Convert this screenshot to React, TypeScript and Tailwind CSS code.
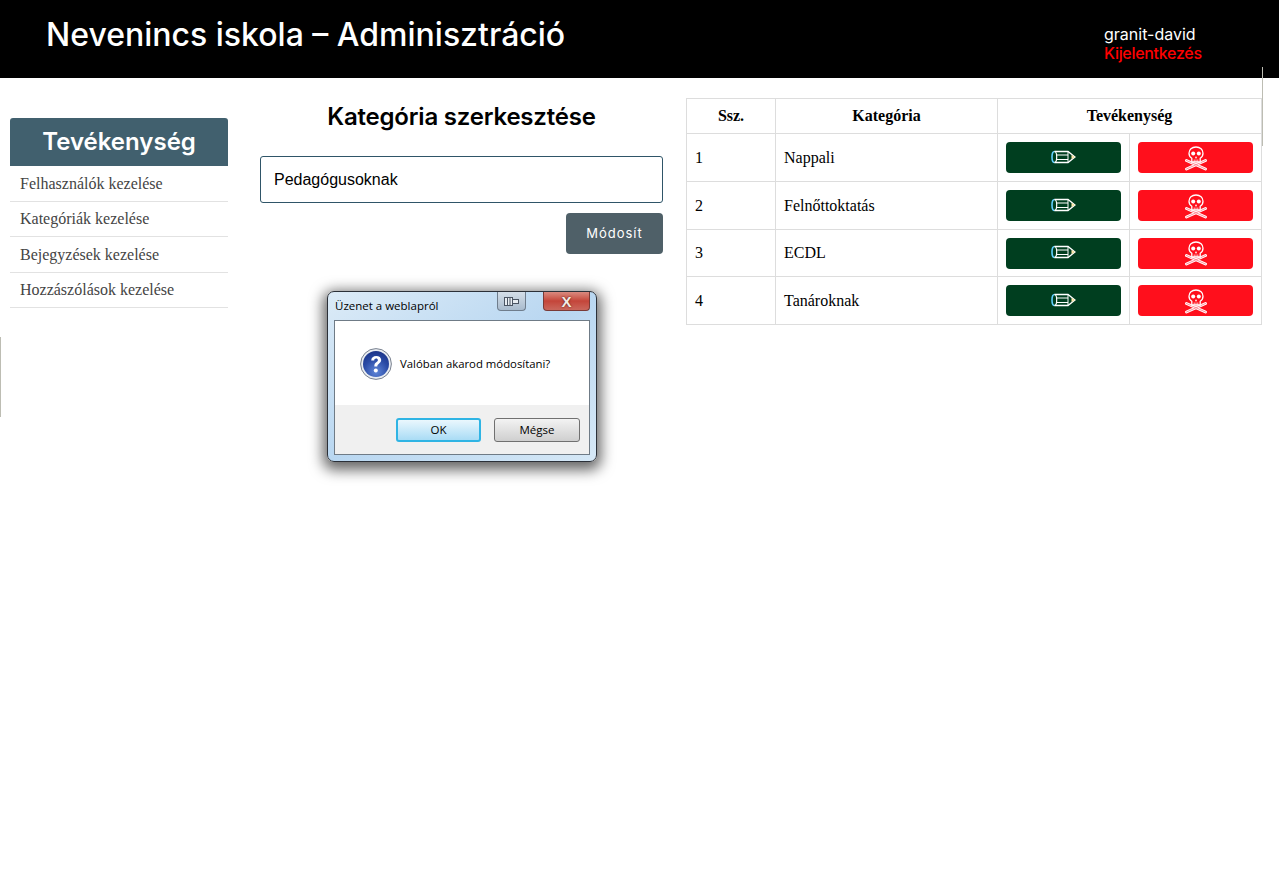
import React from "react";

const rows = [
  { id: 1, name: "Nappali", h: "h-[48px]" },
  { id: 2, name: "Felnőttoktatás", h: "h-[48px]" },
  { id: 3, name: "ECDL", h: "h-[47px]" },
  { id: 4, name: "Tanároknak", h: "h-[48px]" },
];

const menu = [
  { label: "Felhasználók kezelése", h: "h-[36px]" },
  { label: "Kategóriák kezelése", h: "h-[35px]" },
  { label: "Bejegyzések kezelése", h: "h-[36px]" },
  { label: "Hozzászólások kezelése", h: "h-[35px]" },
];

function PencilIcon() {
  return (
    <svg width="25" height="14" viewBox="0 0 25 14" fill="none" className="mb-[2px]">
      <path d="M3.5 1.5C1.8 1.5 1 4 1 7s.8 5.5 2.5 5.5" stroke="#5fd0ff" strokeWidth="1.6" />
      <path d="M3.5 1.5H17L24 7l-7 5.5H3.5" stroke="#ffffff" strokeWidth="1.3" />
      <path d="M3.5 1.5c1.5 0 2.2 2.5 2.2 5.5s-.7 5.5-2.2 5.5" stroke="#ffffff" strokeWidth="1.2" />
      <path d="M5.5 5H17M5.5 9.5H17M17 1.5v11" stroke="#ffffff" />
      <path d="M20.5 5L24 7l-3.5 2z" fill="#ffe9a8" />
    </svg>
  );
}

function SkullIcon() {
  return (
    <svg width="24" height="25" viewBox="0 0 24 25" fill="none" className="mt-[1px]">
      <path d="M2.5 14.5l19 8.5M21.5 14.5L2.5 23" stroke="#ffffff" strokeWidth="3" strokeLinecap="round" />
      <path d="M2.5 14.5l19 8.5M21.5 14.5L2.5 23" stroke="#ff8f9a" strokeWidth="1" strokeLinecap="round" />
      <path d="M12 1C7.8 1 5 3.8 5 7.2c0 2.4 1.1 4.1 2.8 5.1V16h8.4v-3.7c1.7-1 2.8-2.7 2.8-5.1C19 3.8 16.2 1 12 1z" fill="#ff0f1c" stroke="#ffffff" strokeWidth="1.3" />
      <circle cx="9.2" cy="7.6" r="2" fill="#ffffff" />
      <circle cx="14.8" cy="7.6" r="2" fill="#ffffff" />
      <path d="M12 10l-1.1 2.2h2.2z" fill="#ffffff" />
      <path d="M10.2 13.5V16M12 13.5V16M13.8 13.5V16" stroke="#ffffff" strokeWidth="0.8" />
    </svg>
  );
}

function MessageBox() {
  return (
    <div className="absolute left-[327px] top-[291px] w-[270px] h-[171px] rounded-[7px] border border-[#2b3038] bg-gradient-to-br from-[#dcebf7] via-[#b9d7f1] to-[#d6e8f6] shadow-[0_4px_14px_4px_rgba(0,0,0,0.6)] font-['Open_Sans',sans-serif] text-black">
      <div className="h-[28px] pl-[7px] pt-[5px] text-[11.5px] leading-[18px]">Üzenet a weblapról</div>
      <div className="absolute left-[169px] top-0 w-[29px] h-[19px] rounded-b-[4px] border border-t-0 border-[#6f7d8c] bg-gradient-to-b from-[#d5dfe9] to-[#a9bbcd] flex items-center justify-center">
        <svg width="15" height="9" viewBox="0 0 15 9">
          <rect x="0.5" y="0.5" width="8" height="8" fill="#e8edf2" stroke="#4b5563" />
          <path d="M3.5 1v7M6 1v7" stroke="#4b5563" />
          <rect x="8.5" y="2.5" width="6" height="4" fill="#e8edf2" stroke="#4b5563" />
        </svg>
      </div>
      <div className="absolute left-[215px] top-0 w-[47px] h-[19px] rounded-b-[4px] border border-t-0 border-[#7a3a36] bg-gradient-to-b from-[#d98a7f] via-[#c4453a] to-[#c9675c] flex items-center justify-center">
        <span className="text-[15px] leading-none font-bold font-['Liberation_Sans',sans-serif] text-[#f3ece4] [text-shadow:0_0_2px_#4a1410]">X</span>
      </div>
      <div className="mx-[6px] h-[135px] border border-[#6f7b86] bg-white flex flex-col">
        <div className="h-[84px] flex items-center pl-[25px] pt-[1px] gap-[8px]">
          <svg width="32" height="32" viewBox="0 0 32 32">
            <defs>
              <radialGradient id="qb" cx="0.5" cy="0.8" r="0.8">
                <stop offset="0" stopColor="#5f86d8" />
                <stop offset="0.6" stopColor="#2a4ba6" />
                <stop offset="1" stopColor="#1c3488" />
              </radialGradient>
            </defs>
            <circle cx="16" cy="16" r="15.4" fill="#e9edf2" stroke="#7a8290" />
            <circle cx="16" cy="16" r="13" fill="url(#qb)" />
            <path d="M11.2 12.6c0-3 2.2-4.6 5-4.6 2.9 0 5 1.6 5 4.1 0 2-1.2 2.9-2.5 3.8-1 .7-1.4 1.2-1.4 2.6h-3c0-2.3.6-3.2 2-4.2 1-.7 1.6-1.2 1.6-2.1 0-1-.7-1.7-1.8-1.7-1.2 0-1.9.8-1.9 2.1z" fill="#fff" />
            <circle cx="15.8" cy="22.6" r="2" fill="#fff" />
          </svg>
          <span className="text-[11.35px] leading-none">Valóban akarod módosítani?</span>
        </div>
        <div className="flex-1 bg-[#f0f0f0] flex justify-end gap-[13px] pt-[13px] pr-[9px]">
          <button className="w-[85px] h-[24px] rounded-[3px] border-2 border-[#2fb4e4] bg-gradient-to-b from-[#eaf7fd] to-[#a9dcf5] text-[11.5px] leading-none">OK</button>
          <button className="w-[86px] h-[24px] rounded-[3px] border border-[#707070] bg-gradient-to-b from-[#f3f3f3] to-[#cfcfcf] text-[11.5px] leading-none">Mégse</button>
        </div>
      </div>
    </div>
  );
}

function App() {
  return (
    <div className="relative w-[1279px] h-[870px] overflow-hidden bg-white">
      <header className="h-[78px] bg-black text-white flex justify-between font-['Inter',sans-serif]">
        <h1 className="ml-[46px] mt-[15px] text-[32px] leading-[40px] font-medium">Nevenincs iskola – Adminisztráció</h1>
        <div className="w-[175px] pt-[25px] text-[16px] leading-[19px]">
          <div>granit-david</div>
          <div className="font-medium tracking-[-0.3px] text-[#ff0000]">Kijelentkezés</div>
        </div>
      </header>

      <div className="absolute right-[16px] top-[67px] w-px h-[79px] bg-[#bdbdb3]" />
      <div className="absolute left-0 top-[337px] w-px h-[80px] bg-[#bdbdb3]" />

      <main className="flex items-start">
        <aside className="w-[218px] ml-[10px] mt-[40px]">
          <div className="h-[48px] rounded-t-[3px] bg-[#41606e] text-white text-center font-['Inter',sans-serif] font-semibold text-[24px] leading-[48px]">Tevékenység</div>
          {menu.map((m) => (
            <div key={m.label} className={`${m.h} border-b border-[#e2e2e2] pl-[10px] flex items-center font-['Liberation_Serif',serif] text-[16px] text-[#444444]`}>
              {m.label}
            </div>
          ))}
        </aside>

        <section className="w-[403px] ml-[32px]">
          <h2 className="mt-[24px] h-[30px] text-center font-['Inter',sans-serif] font-semibold text-[24px] leading-[30px] tracking-[-0.2px] text-black">Kategória szerkesztése</h2>
          <div className="mt-[24px] h-[47px] rounded-[3px] border border-[#2f5568] pl-[13px] flex items-center font-['Liberation_Sans',sans-serif] text-[16px] text-black">Pedagógusoknak</div>
          <div className="mt-[10px] flex justify-end">
            <button className="w-[97px] h-[41px] rounded-[4px] bg-[#4f6068] text-white font-['Inter',sans-serif] text-[13px] tracking-[1px]">Módosít</button>
          </div>
        </section>

        <table className="ml-[23px] mt-[20px] w-[576px] table-fixed border-collapse font-['Liberation_Serif',serif] text-[16px] text-black">
          <colgroup>
            <col className="w-[89px]" />
            <col className="w-[222px]" />
            <col className="w-[132px]" />
            <col className="w-[132px]" />
          </colgroup>
          <thead>
            <tr className="h-[35px]">
              <th className="border border-[#dddddd] font-bold">Ssz.</th>
              <th className="border border-[#dddddd] font-bold">Kategória</th>
              <th colSpan={2} className="border border-[#dddddd] font-bold">Tevékenység</th>
            </tr>
          </thead>
          <tbody>
            {rows.map((r) => (
              <tr key={r.id} className={r.h}>
                <td className="border border-[#dddddd] pl-[8px]">{r.id}</td>
                <td className="border border-[#dddddd] pl-[8px]">{r.name}</td>
                <td className="border border-[#dddddd] px-[8px]">
                  <div className="h-[31px] rounded-[4px] bg-[#003e1f] flex items-center justify-center"><PencilIcon /></div>
                </td>
                <td className="border border-[#dddddd] px-[8px]">
                  <div className="h-[31px] rounded-[4px] bg-[#ff0f1c] flex items-center justify-center"><SkullIcon /></div>
                </td>
              </tr>
            ))}
          </tbody>
        </table>
      </main>

      <MessageBox />
    </div>
  );
}

export default App;
